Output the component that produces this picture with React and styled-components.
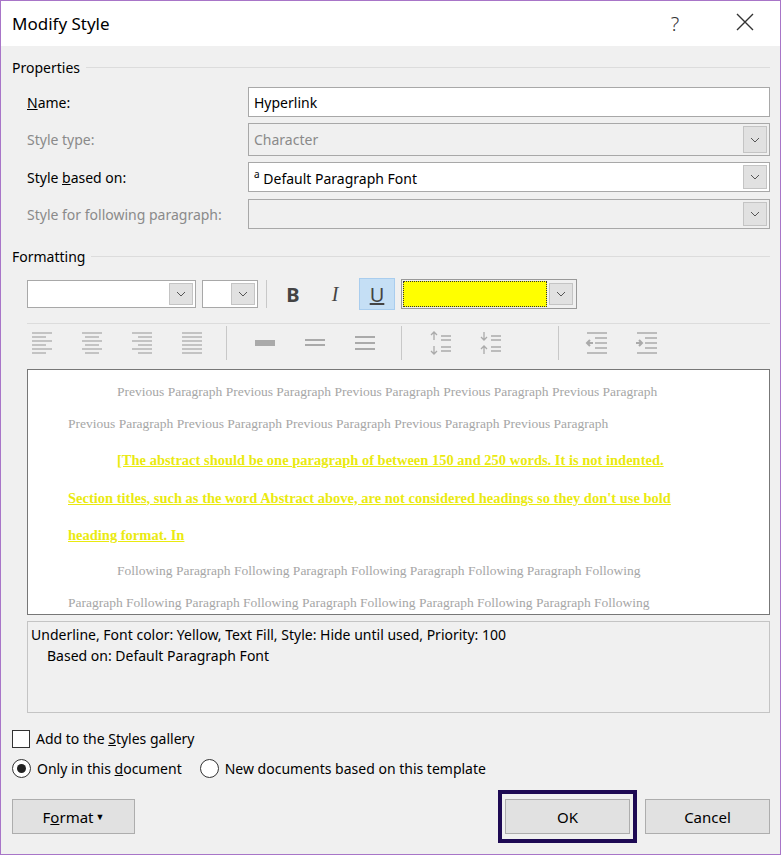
import React from 'react';
import styled, { createGlobalStyle } from 'styled-components';

const Global = createGlobalStyle`
  body { margin: 0; font-family: "Noto Sans", "Open Sans", sans-serif; }
`;

const Dialog = styled.div`
  width: 781px;
  height: 855px;
  box-sizing: border-box;
  border: 1px solid #a875c8;
  background: #f0f0f0;
  display: flex;
  flex-direction: column;
  font-size: 14px;
  color: #000;
`;

const TitleBar = styled.div`
  height: 45px;
  background: #fff;
  display: flex;
  align-items: center;
  padding-left: 11px;
  font-size: 17px;
`;

const TitleText = styled.div` flex: 1; `;

const TitleBtn = styled.div`
  width: 70px;
  text-align: center;
  font-size: 20px;
  color: #333;
  font-weight: 300;
`;

const Body = styled.div`
  padding: 8px 10px 0 11px;
  display: flex;
  flex-direction: column;
`;

const GroupTitle = styled.div`
  display: flex;
  align-items: center;
  gap: 6px;
  height: 26px;
  &::after { content: ''; flex: 1; height: 1px; background: #dcdcdc; }
`;

const PropRow = styled.div`
  display: grid;
  grid-template-columns: 221px 1fr;
  align-items: center;
  padding-left: 15px;
  margin-top: ${p => p.$mt}px;
  color: ${p => (p.$dim ? '#8a8a8a' : '#000')};
`;

const Field = styled.div`
  height: ${p => p.$h || 30}px;
  box-sizing: border-box;
  border: 1px solid #a8a8a8;
  background: ${p => (p.$dim ? '#f0f0f0' : '#fff')};
  display: flex;
  align-items: center;
  padding-left: 5px;
  color: ${p => (p.$dim ? '#8a8a8a' : '#000')};
`;

const FieldText = styled.div` flex: 1; `;

const DropBtn = styled.div`
  width: 22px;
  align-self: stretch;
  margin: 2px;
  background: #e1e1e1;
  border: 1px solid #c4c4c4;
  display: flex;
  align-items: center;
  justify-content: center;
  color: #555;
`;

const Chevron = () => (
  <svg width="10" height="6" viewBox="0 0 10 6"><path d="M1 1l4 4 4-4" fill="none" stroke="#555" strokeWidth="1" /></svg>
);

const Toolbar = styled.div`
  display: flex;
  align-items: center;
  gap: 6px;
  padding-left: 15px;
  margin-top: 10px;
  height: 30px;
`;

const Combo = styled.div`
  width: ${p => p.$w}px;
  height: 28px;
  box-sizing: border-box;
  border: 1px solid #a8a8a8;
  background: #fff;
  display: flex;
  justify-content: flex-end;
`;

const VSep = styled.div`
  width: 1px;
  height: ${p => p.$h || 28}px;
  background: #c8c8c8;
  margin: 0 ${p => p.$m || 8}px;
`;

const FmtBtn = styled.div`
  width: 34px;
  height: 30px;
  display: flex;
  align-items: center;
  justify-content: center;
  font-size: 20px;
  color: #444;
  background: ${p => (p.$on ? '#c5dff5' : 'transparent')};
  border: 1px solid ${p => (p.$on ? '#a9cdee' : 'transparent')};
  font-family: ${p => (p.$serif ? '"Liberation Serif", serif' : 'inherit')};
  font-style: ${p => (p.$it ? 'italic' : 'normal')};
  font-weight: ${p => (p.$b ? 700 : 400)};
  text-decoration: ${p => (p.$u ? 'underline' : 'none')};
`;

const ColorCombo = styled.div`
  width: 176px;
  height: 30px;
  box-sizing: border-box;
  border: 1px solid #999;
  display: flex;
  padding: 1px;
`;

const Swatch = styled.div`
  flex: 1;
  background: #ffff00;
  outline: 1px dotted #333;
  outline-offset: -1px;
`;

const HLine = styled.div`
  height: 1px;
  background: #dcdcdc;
  margin: 14px 0 0 15px;
`;

const AlignRow = styled.div`
  display: flex;
  align-items: center;
  padding-left: 20px;
  height: 38px;
`;

const IconSlot = styled.div`
  width: ${p => p.$w || 50}px;
  padding-left: ${p => p.$pl || 0}px;
  display: flex;
  justify-content: flex-start;
`;

const lines = (xs) => xs.map((l, i) => (
  <line key={i} x1={l[0]} x2={l[1]} y1={2 + i * 4} y2={2 + i * 4} stroke="#aaa" strokeWidth="1.3" />
));

const AlignIcon = ({ kind }) => {
  const sets = {
    left: [[0, 20], [0, 14], [0, 20], [0, 14], [0, 20], [0, 14]],
    center: [[0, 20], [3, 17], [0, 20], [3, 17], [0, 20], [3, 17]],
    right: [[0, 20], [6, 20], [0, 20], [6, 20], [0, 20], [6, 20]],
    just: [[0, 20], [0, 20], [0, 20], [0, 20], [0, 20], [0, 20]],
  };
  return <svg width="20" height="24" viewBox="0 0 20 24">{lines(sets[kind])}</svg>;
};

const SpacingIcon = ({ n }) => (
  <svg width="20" height="24" viewBox="0 0 20 24">
    {n === 1 && <rect x="0" y="9" width="20" height="6" fill="#aaa" />}
    {n === 2 && <><line x1="0" x2="20" y1="9" y2="9" stroke="#aaa" strokeWidth="2" /><line x1="0" x2="20" y1="14" y2="14" stroke="#aaa" strokeWidth="2" /></>}
    {n === 3 && <><line x1="0" x2="20" y1="6" y2="6" stroke="#aaa" strokeWidth="2" /><line x1="0" x2="20" y1="12" y2="12" stroke="#aaa" strokeWidth="2" /><line x1="0" x2="20" y1="18" y2="18" stroke="#aaa" strokeWidth="2" /></>}
  </svg>
);

const ParaIcon = ({ up }) => (
  <svg width="24" height="26" viewBox="0 0 24 26">
    {up ? (
      <path d="M4 2v8M1 5l3-3 3 3M4 16v8M1 21l3 3 3-3" stroke="#aaa" fill="none" strokeWidth="1.3" />
    ) : (
      <path d="M4 2v8M1 7l3 3 3-3M4 16v8M1 19l3-3 3 3" stroke="#aaa" fill="none" strokeWidth="1.3" />
    )}
    <path d="M11 6h10M11 10h10M11 17h10M11 21h10" stroke="#aaa" strokeWidth="1.3" />
  </svg>
);

const IndentIcon = ({ inc }) => (
  <svg width="22" height="24" viewBox="0 0 22 24">
    <path d="M2 2h20M10 7h12M10 12h12M10 17h12M2 22h20" stroke="#aaa" strokeWidth="1.3" />
    {inc ? <path d="M1 12h6M4 9l3 3-3 3" stroke="#aaa" strokeWidth="2" fill="none" />
      : <path d="M8 12H2M5 9l-3 3 3 3" stroke="#aaa" strokeWidth="2" fill="none" />}
  </svg>
);

const Preview = styled.div`
  margin: 7px 0 0 15px;
  height: 246px;
  box-sizing: border-box;
  border: 1px solid #777;
  background: #fff;
  padding: 6px 78px 0 40px;
  font-family: "Liberation Serif", serif;
  overflow: hidden;
`;

const GrayPara = styled.p`
  margin: 0 0 ${p => p.$mb || 0}px;
  color: #a6a6a6;
  font-size: 13.5px;
  line-height: 32px;
  text-indent: 49px;
`;

const YellowPara = styled.p`
  margin: 0;
  color: #eaea10;
  font-size: 14.5px;
  font-weight: 700;
  line-height: 37.5px;
  text-indent: 49px;
  text-decoration: underline;
`;

const Description = styled.div`
  margin: 6px 0 0 15px;
  height: 92px;
  box-sizing: border-box;
  border: 1px solid #c4c4c4;
  padding: 2px 3px;
  line-height: 21px;
`;

const Indent = styled.div` padding-left: 16px; `;

const OptionRow = styled.div`
  display: flex;
  align-items: center;
  gap: 6px;
  margin-top: ${p => p.$mt}px;
`;

const Box = styled.span`
  width: 18px;
  height: 18px;
  box-sizing: border-box;
  border: 1px solid #333;
  background: #fff;
`;

const Radio = styled.span`
  width: 19px;
  height: 19px;
  box-sizing: border-box;
  border-radius: 50%;
  border: 1px solid #333;
  background: #fff;
  margin-left: ${p => p.$ml || 0}px;
  display: flex;
  align-items: center;
  justify-content: center;
  &::after {
    content: '';
    width: 9px;
    height: 9px;
    border-radius: 50%;
    background: ${p => (p.$on ? '#222' : 'transparent')};
  }
`;

const ButtonBar = styled.div`
  display: flex;
  align-items: center;
  margin-top: 12px;
  gap: 8px;
`;

const Button = styled.div`
  width: ${p => p.$w || 123}px;
  height: 35px;
  box-sizing: border-box;
  border: 1px solid #adadad;
  background: #e1e1e1;
  display: flex;
  align-items: center;
  justify-content: center;
  font-size: 15px;
`;

const Caret = styled.span`
  font-size: 9px;
  margin-left: 2px;
  position: relative;
  top: -3px;
`;

const Focus = styled.div`
  margin-left: auto;
  border: 4px solid #1e0a54;
  padding: 5px 3px;
`;

const U = styled.span` text-decoration: underline; `;

export default function App() {
  return (
    <Dialog>
      <Global />
      <TitleBar>
        <TitleText>Modify Style</TitleText>
        <TitleBtn>?</TitleBtn>
        <TitleBtn>
          <svg width="18" height="18" viewBox="0 0 18 18"><path d="M1 1l16 16M17 1L1 17" stroke="#333" strokeWidth="1.4" /></svg>
        </TitleBtn>
      </TitleBar>
      <Body>
        <GroupTitle>Properties</GroupTitle>
        <PropRow $mt={7}>
          <span><U>N</U>ame:</span>
          <Field><FieldText>Hyperlink</FieldText></Field>
        </PropRow>
        <PropRow $mt={6} $dim>
          <span>Style type:</span>
          <Field $dim $h={33}><FieldText>Character</FieldText><DropBtn><Chevron /></DropBtn></Field>
        </PropRow>
        <PropRow $mt={6}>
          <span>Style <U>b</U>ased on:</span>
          <Field><FieldText><sup style={{ fontSize: 10 }}>a</sup> Default Paragraph Font</FieldText><DropBtn><Chevron /></DropBtn></Field>
        </PropRow>
        <PropRow $mt={7} $dim>
          <span>Style for following paragraph:</span>
          <Field $dim><FieldText /><DropBtn><Chevron /></DropBtn></Field>
        </PropRow>

        <GroupTitle style={{ marginTop: 14 }}>Formatting</GroupTitle>
        <Toolbar>
          <Combo $w={169}><DropBtn><Chevron /></DropBtn></Combo>
          <Combo $w={56}><DropBtn><Chevron /></DropBtn></Combo>
          <VSep $m={2} />
          <FmtBtn $b>B</FmtBtn>
          <FmtBtn $it $serif>I</FmtBtn>
          <FmtBtn $on $u>U</FmtBtn>
          <ColorCombo><Swatch /><DropBtn><Chevron /></DropBtn></ColorCombo>
        </Toolbar>
        <HLine />
        <AlignRow>
          <IconSlot><AlignIcon kind="left" /></IconSlot>
          <IconSlot><AlignIcon kind="center" /></IconSlot>
          <IconSlot><AlignIcon kind="right" /></IconSlot>
          <IconSlot $w={36}><AlignIcon kind="just" /></IconSlot>
          <VSep $h={34} $m={0} />
          <IconSlot $pl={20}><SpacingIcon n={1} /></IconSlot>
          <IconSlot><SpacingIcon n={2} /></IconSlot>
          <IconSlot $w={38}><SpacingIcon n={3} /></IconSlot>
          <VSep $h={34} $m={0} />
          <IconSlot $pl={20}><ParaIcon up /></IconSlot>
          <IconSlot $w={70}><ParaIcon /></IconSlot>
          <VSep $h={34} $m={0} />
          <IconSlot $pl={18}><IndentIcon /></IconSlot>
          <IconSlot><IndentIcon inc /></IconSlot>
        </AlignRow>
        <Preview>
          <GrayPara $mb={2}>Previous Paragraph Previous Paragraph Previous Paragraph Previous Paragraph Previous Paragraph Previous Paragraph Previous Paragraph Previous Paragraph Previous Paragraph Previous Paragraph</GrayPara>
          <YellowPara>[The abstract should be one paragraph of between 150 and 250 words.  It is not indented. Section titles, such as the word Abstract above, are not considered headings so they don't use bold heading format.  In</YellowPara>
          <GrayPara>Following Paragraph Following Paragraph Following Paragraph Following Paragraph Following Paragraph Following Paragraph Following Paragraph Following Paragraph Following Paragraph Following</GrayPara>
        </Preview>
        <Description>
          Underline, Font color: Yellow, Text Fill, Style: Hide until used, Priority: 100
          <Indent>Based on: Default Paragraph Font</Indent>
        </Description>
        <OptionRow $mt={16}><Box /><span>Add to the <U>S</U>tyles gallery</span></OptionRow>
        <OptionRow $mt={11}>
          <Radio $on /><span>Only in this <U>d</U>ocument</span>
          <Radio $ml={12} /><span>New documents based on this template</span>
        </OptionRow>
        <ButtonBar>
          <Button $w={123}><span>F<U>o</U>rmat<Caret>▼</Caret></span></Button>
          <Focus><Button $w={125}>OK</Button></Focus>
          <Button $w={125}>Cancel</Button>
        </ButtonBar>
      </Body>
    </Dialog>
  );
}
